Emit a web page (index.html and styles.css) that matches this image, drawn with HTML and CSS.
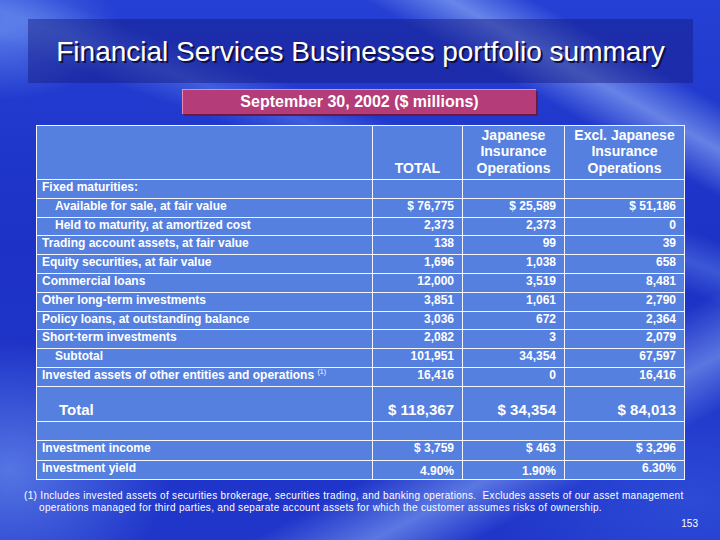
FILE: index.html
```html
<!DOCTYPE html>
<html>
<head>
<meta charset="utf-8">
<link rel="stylesheet" href="styles.css">
</head>
<body>
<div class="slide">
  <div class="title-box"><h1 class="title">Financial Services Businesses portfolio summary</h1></div>
  <div class="subtitle">September 30, 2002 ($ millions)</div>
  <div class="grid">
    <div class="c head"></div>
    <div class="c head ctr">TOTAL</div>
    <div class="c head ctr">Japanese<br>Insurance<br>Operations</div>
    <div class="c head ctr">Excl. Japanese<br>Insurance<br>Operations</div>

    <div class="c lbl">Fixed maturities:</div><div class="c"></div><div class="c"></div><div class="c"></div>

    <div class="c lbl sub">Available for sale, at fair value</div><div class="c num">$ 76,775</div><div class="c num">$ 25,589</div><div class="c num">$ 51,186</div>
    <div class="c lbl sub">Held to maturity, at amortized cost</div><div class="c num">2,373</div><div class="c num">2,373</div><div class="c num">0</div>
    <div class="c lbl">Trading account assets, at fair value</div><div class="c num">138</div><div class="c num">99</div><div class="c num">39</div>
    <div class="c lbl">Equity securities, at fair value</div><div class="c num">1,696</div><div class="c num">1,038</div><div class="c num">658</div>
    <div class="c lbl">Commercial loans</div><div class="c num">12,000</div><div class="c num">3,519</div><div class="c num">8,481</div>
    <div class="c lbl">Other long-term investments</div><div class="c num">3,851</div><div class="c num">1,061</div><div class="c num">2,790</div>
    <div class="c lbl">Policy loans, at outstanding balance</div><div class="c num">3,036</div><div class="c num">672</div><div class="c num">2,364</div>
    <div class="c lbl">Short-term investments</div><div class="c num">2,082</div><div class="c num">3</div><div class="c num">2,079</div>
    <div class="c lbl sub">Subtotal</div><div class="c num">101,951</div><div class="c num">34,354</div><div class="c num">67,597</div>
    <div class="c lbl">Invested assets of other entities and operations <sup class="fn">(1)</sup></div><div class="c num">16,416</div><div class="c num">0</div><div class="c num">16,416</div>

    <div class="c lbl total">Total</div><div class="c num total">$ 118,367</div><div class="c num total">$ 34,354</div><div class="c num total">$ 84,013</div>

    <div class="c"></div><div class="c"></div><div class="c"></div><div class="c"></div>

    <div class="c lbl">Investment income</div><div class="c num">$ 3,759</div><div class="c num">$ 463</div><div class="c num">$ 3,296</div>
    <div class="c lbl">Investment yield</div><div class="c num yld">4.90%</div><div class="c num yld">1.90%</div><div class="c num">6.30%</div>
  </div>
  <p class="footnote">(1) Includes invested assets of securities brokerage, securities trading, and banking operations.&nbsp; Excludes assets of our asset management<br>operations managed for third parties, and separate account assets for which the customer assumes risks of ownership.</p>
  <div class="pageno">153</div>
</div>
</body>
</html>
```
FILE: styles.css
```css
html, body {
  margin: 0;
  padding: 0;
}
body {
  width: 720px;
  height: 540px;
  overflow: hidden;
  font-family: "Liberation Sans", Arial, sans-serif;
  color: #fff;
}
.slide {
  width: 720px;
  height: 540px;
  box-sizing: border-box;
  display: flex;
  flex-direction: column;
  background:
    radial-gradient(ellipse 120px 70px at 0px 30px, rgba(120,160,245,0.6), rgba(120,160,245,0) 100%),
    linear-gradient(29deg, rgba(0,0,0,0) 79%, rgba(160,190,250,0.55) 84%, rgba(0,0,0,0) 89%),
    linear-gradient(20deg, rgba(0,0,0,0) 62%, rgba(120,160,245,0.35) 66%, rgba(0,0,0,0) 70%),
    linear-gradient(-28deg, rgba(0,0,0,0) 14%, rgba(150,185,250,0.5) 20%, rgba(0,0,0,0) 27%),
    radial-gradient(ellipse 160px 130px at 10px 470px, rgba(120,160,245,0.6), rgba(120,160,245,0) 100%),
    radial-gradient(ellipse 200px 120px at 690px 500px, rgba(60,100,230,0.45), rgba(60,100,230,0) 100%),
    linear-gradient(180deg, #2540d4 0%, #1d31c6 45%, #2036ca 100%);
}
.title-box {
  margin: 19px 0 0 28px;
  width: 665px;
  height: 64px;
  background: rgba(20, 24, 125, 0.45);
  display: flex;
  align-items: center;
  justify-content: center;
}
.title {
  margin: 0;
  font-weight: normal;
  font-size: 28px;
  line-height: 32px;
  padding-top: 2px;
  text-shadow: 2px 2px 0 #101040;
}
.subtitle {
  margin: 6px 0 0 182px;
  width: 354px;
  height: 25px;
  box-sizing: border-box;
  background: #b43c78;
  border-top: 1px solid #e88ab8;
  border-left: 1px solid #e88ab8;
  box-shadow: 2px 2px 0 #6b1842;
  font-weight: bold;
  font-size: 16px;
  line-height: 24px;
  text-align: center;
}
.grid {
  margin: 11px 0 0 36px;
  width: fit-content;
  display: grid;
  grid-template-columns: 335px 89px 101px 119px;
  grid-template-rows: 53px repeat(11, 17.8px) 34px 18px 19px 18px;
  gap: 1px;
  padding: 1px;
  background: #f4f6ff;
}
.c {
  background: #5580e0;
  font-weight: bold;
  font-size: 12px;
  line-height: 14px;
  white-space: nowrap;
}
.head {
  font-size: 14px;
  line-height: 16.5px;
  display: flex;
  align-items: flex-end;
  justify-content: center;
  text-align: center;
  padding-bottom: 3px;
}
.lbl {
  padding-left: 5px;
}
.lbl.sub {
  padding-left: 18px;
}
.num {
  text-align: right;
  padding-right: 8px;
}
.yld {
  padding-top: 3px;
}
.total {
  font-size: 15px;
  line-height: 18px;
  display: flex;
  align-items: flex-end;
  padding-bottom: 2px;
}
.num.total {
  justify-content: flex-end;
}
.lbl.total {
  padding-left: 22px;
}
.fn {
  font-size: 7px;
  font-weight: normal;
  vertical-align: 5px;
  line-height: 0;
}
.footnote {
  margin: 10px 0 0 24px;
  padding-left: 15px;
  text-indent: -15px;
  font-size: 10px;
  line-height: 12px;
  letter-spacing: 0.32px;
  white-space: nowrap;
}
.pageno {
  margin: 4px 22px 0 0;
  align-self: flex-end;
  font-size: 10px;
  line-height: 12px;
}
```
